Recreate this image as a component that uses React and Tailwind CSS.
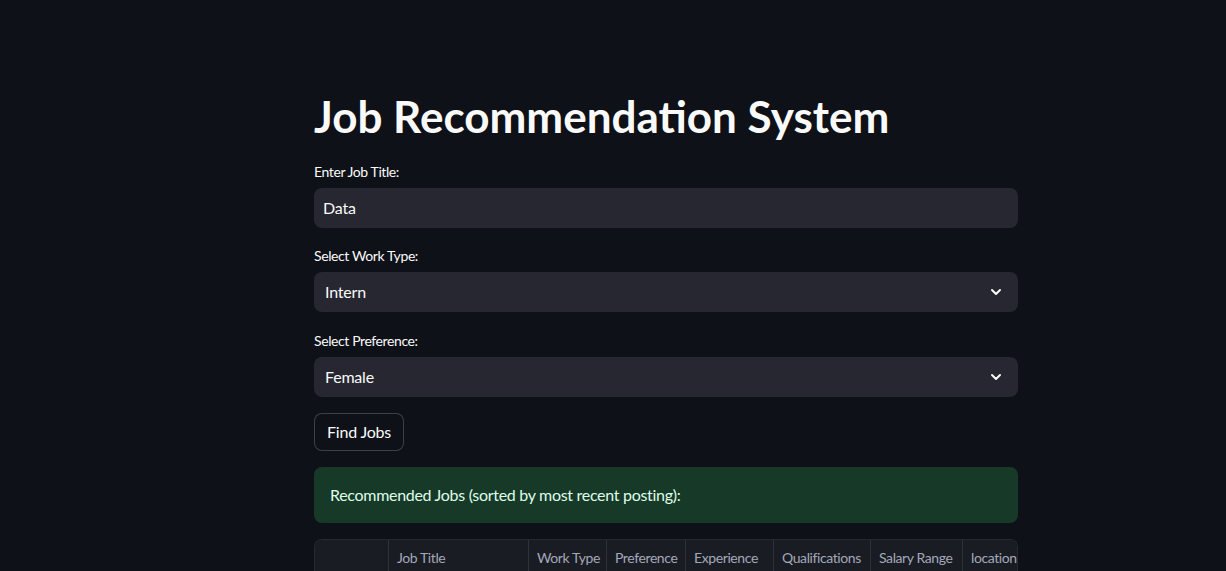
import { ChevronDown } from 'lucide-react';

const font = { fontFamily: 'Lato, "Noto Sans", sans-serif' };

function Label({ children }) {
  return <div className="h-6 flex items-center text-sm tracking-[-0.4px] text-[#fafafa] mb-1">{children}</div>;
}

function SelectBox({ value }) {
  return (
    <div className="h-10 rounded-lg bg-[#262730] flex items-center justify-between pl-[11px] pr-[14px] text-base tracking-[-0.2px] text-[#fafafa]">
      <span>{value}</span>
      <ChevronDown className="w-4 h-4" strokeWidth={3} />
    </div>
  );
}

const columns = [
  { name: '', w: 'w-[73px]' },
  { name: 'Job Title', w: 'w-[140px]' },
  { name: 'Work Type', w: 'w-[78px]' },
  { name: 'Preference', w: 'w-[79px]' },
  { name: 'Experience', w: 'w-[88px]' },
  { name: 'Qualifications', w: 'w-[97px]' },
  { name: 'Salary Range', w: 'w-[92px]' },
  { name: 'location', w: 'w-[90px]' },
];

export default function App() {
  return (
    <div className="h-[571px] overflow-hidden bg-[#0e1117] text-[#fafafa]" style={font}>
      <div className="ml-[314px] w-[704px] pt-[90px] flex flex-col">
        <h1 className="h-[52px] leading-[52px] text-[44px] font-bold tracking-[0px]">Job Recommendation System</h1>

        <div className="mt-[18px]">
          <Label>Enter Job Title:</Label>
          <div className="h-10 rounded-lg bg-[#262730] flex items-center px-[9px] text-base tracking-[-0.2px]">Data</div>
        </div>

        <div className="mt-4">
          <Label>Select Work Type:</Label>
          <SelectBox value="Intern" />
        </div>

        <div className="mt-[17px]">
          <Label>Select Preference:</Label>
          <SelectBox value="Female" />
        </div>

        <div className="mt-4">
          <button className="h-[38px] px-3 rounded-lg border border-[#fafafa]/20 bg-[#0e1117] text-base tracking-[-0.2px]">Find Jobs</button>
        </div>

        <div className="mt-4 h-14 rounded-lg bg-[#173928] flex items-center px-4 text-base tracking-[-0.3px] text-[#dffde9]">
          Recommended Jobs (sorted by most recent posting):
        </div>

        <div className="mt-4 rounded-t-lg border border-[#fafafa]/10 border-b-0 overflow-hidden">
          <div className="flex h-9 bg-[#1a1c24] text-sm tracking-[-0.4px] text-[#a3a8b8] whitespace-nowrap">
            {columns.map((c, i) => (
              <div
                key={i}
                className={`${c.w} shrink-0 flex items-center px-2 ${i > 0 ? 'border-l border-[#fafafa]/10' : ''}`}
              >
                {c.name}
              </div>
            ))}
          </div>
        </div>
      </div>
    </div>
  );
}
